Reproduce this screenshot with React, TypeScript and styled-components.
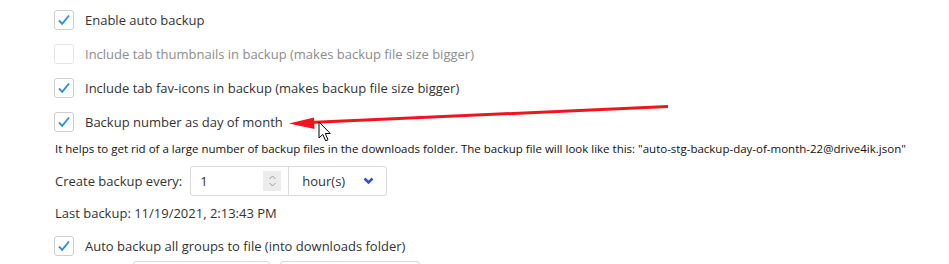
import React from 'react'
import styled, { createGlobalStyle } from 'styled-components'

const GlobalStyle = createGlobalStyle`
	html, body {
		margin: 0;
		padding: 0;
		background: #fff;
	}
	body {
		font-family: 'Open Sans', 'Noto Sans', sans-serif;
		color: #333;
	}
`

const options = [
	{ label: 'Enable auto backup', checked: true },
	{ label: 'Include tab thumbnails in backup (makes backup file size bigger)', checked: false, disabled: true },
	{ label: 'Include tab fav-icons in backup (makes backup file size bigger)', checked: true },
	{ label: 'Backup number as day of month', checked: true },
]

const Check: React.FC<{ checked: boolean; disabled?: boolean }> = ({ checked, disabled }) => (
	<StyledBox $disabled={disabled}>
		{checked && (
			<svg width="14" height="12" viewBox="0 0 14 12">
				<path d="M2 6.5 L5.2 9.8 L12 1.5" fill="none" stroke="#2b8fd6" strokeWidth="1.8" />
			</svg>
		)}
	</StyledBox>
)

const App: React.FC = () => {
	return (
		<>
			<GlobalStyle />
			<StyledPage>
				<StyledOptions>
					{options.map((o) => (
						<StyledRow key={o.label}>
							<Check checked={o.checked} disabled={o.disabled} />
							<StyledLabel $disabled={o.disabled}>{o.label}</StyledLabel>
						</StyledRow>
					))}
				</StyledOptions>
				<StyledInfo>
					It helps to get rid of a large number of backup files in the downloads folder. The backup file will look
					like this: "auto-stg-backup-day-of-month-22@drive4ik.json"
				</StyledInfo>
				<StyledField>
					<span>Create backup every:</span>
					<StyledGroup>
						<StyledNumber>
							<span>1</span>
							<StyledSpin>
								<svg width="9" height="14" viewBox="0 0 9 14">
									<path d="M1.5 5 L4.5 2 L7.5 5 M1.5 9 L4.5 12 L7.5 9" fill="none" stroke="#999" strokeWidth="1" />
								</svg>
							</StyledSpin>
						</StyledNumber>
						<StyledSelect>
							<span>hour(s)</span>
							<svg width="11" height="8" viewBox="0 0 11 8">
								<path d="M1.5 1.5 L5.5 5.5 L9.5 1.5" fill="none" stroke="#3a4fc2" strokeWidth="2.6" />
							</svg>
						</StyledSelect>
					</StyledGroup>
				</StyledField>
				<StyledLast>Last backup: 11/19/2021, 2:13:43 PM</StyledLast>
				<StyledRow>
					<Check checked />
					<StyledLabel>Auto backup all groups to file (into downloads folder)</StyledLabel>
				</StyledRow>
				<StyledStub>
					<StyledStubBox $width={137} />
					<StyledStubBox $width={140} />
				</StyledStub>
				<StyledArrow width="949" height="264" viewBox="0 0 949 264">
					<line x1="668" y1="106.5" x2="304" y2="122.8" stroke="#f0141e" strokeWidth="3" />
					<path d="M289 123.4 L314 117.5 L314.5 129 Z" fill="#f0141e" />
				</StyledArrow>
				<StyledCursor width="16" height="24" viewBox="0 0 16 24">
					<path
						d="M1 1 L1 17 L4.8 13.4 L7.6 19.8 L10 18.8 L7.3 12.5 L12.3 12.5 Z"
						fill="#fff"
						stroke="#000"
						strokeWidth="1"
						strokeLinejoin="round"
					/>
				</StyledCursor>
			</StyledPage>
		</>
	)
}

const StyledPage = styled.div`
	position: relative;
	width: 949px;
	height: 264px;
	overflow: hidden;
	box-sizing: border-box;
	padding: 10px 0 0 54px;
	font-size: 13px;
`

const StyledOptions = styled.div`
	display: flex;
	flex-direction: column;
	gap: 14px;
`

const StyledRow = styled.div`
	display: flex;
	align-items: center;
	height: 20px;
`

const StyledBox = styled.div<{ $disabled?: boolean }>`
	box-sizing: border-box;
	width: 20px;
	height: 20px;
	border: 1px solid ${(p) => (p.$disabled ? '#e4e4e4' : '#cfcfcf')};
	border-radius: 3px;
	display: flex;
	align-items: center;
	justify-content: center;
	margin-right: 11px;
	background: #fff;
`

const StyledLabel = styled.span<{ $disabled?: boolean }>`
	color: ${(p) => (p.$disabled ? '#8c8c8c' : '#333')};
	font-size: 13px;
`

const StyledInfo = styled.div`
	margin: 8px 0 0 1px;
	font-size: 11.5px;
	line-height: 17px;
	color: #111;
	white-space: nowrap;
`

const StyledField = styled.div`
	display: flex;
	align-items: center;
	gap: 8px;
	margin: 9px 0 0 1px;
`

const StyledGroup = styled.div`
	display: flex;
	height: 30px;
	border: 1px solid #d9d9d9;
	border-radius: 3px;
	box-sizing: border-box;
`

const StyledNumber = styled.div`
	display: flex;
	align-items: center;
	justify-content: space-between;
	width: 98px;
	padding: 0 7px 0 9px;
	box-sizing: border-box;
	border-right: 1px solid #d9d9d9;
`

const StyledSpin = styled.div`
	display: flex;
	align-items: center;
	justify-content: center;
	width: 18px;
	height: 20px;
	background: #ececec;
`

const StyledSelect = styled.div`
	display: flex;
	align-items: center;
	justify-content: space-between;
	width: 97px;
	padding: 0 12px 0 13px;
	box-sizing: border-box;
`

const StyledLast = styled.div`
	margin: 7px 0 13px 1px;
	line-height: 20px;
`

const StyledStub = styled.div`
	display: flex;
	gap: 10px;
	margin: 5px 0 0 79px;
`

const StyledStubBox = styled.div<{ $width: number }>`
	width: ${(p) => p.$width}px;
	height: 30px;
	border: 1px solid #d9d9d9;
	border-radius: 3px;
	box-sizing: border-box;
`

const StyledArrow = styled.svg`
	position: absolute;
	left: 0;
	top: 0;
	pointer-events: none;
`

const StyledCursor = styled.svg`
	position: absolute;
	left: 318px;
	top: 121px;
`

export default App
